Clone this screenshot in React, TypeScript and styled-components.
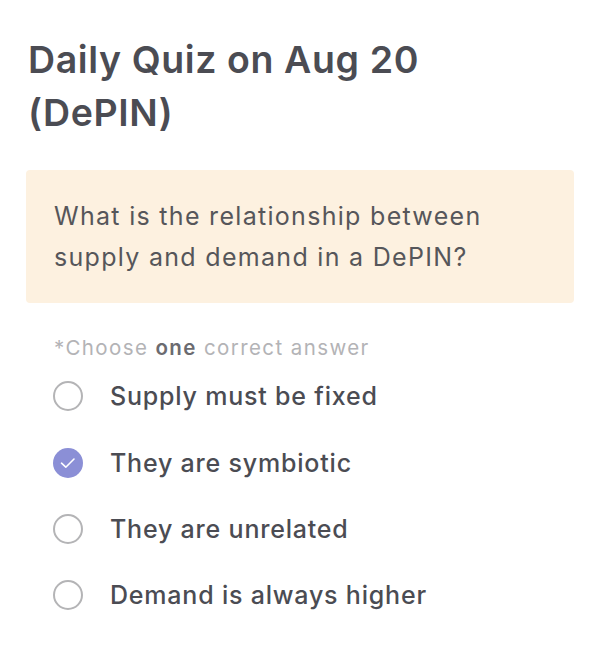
import React, { useState } from 'react';
import styled, { createGlobalStyle } from 'styled-components';

const GlobalStyle = createGlobalStyle`
  html, body {
    margin: 0;
    padding: 0;
    background: #ffffff;
  }
  body {
    font-family: Inter, 'Noto Sans', sans-serif;
  }
`;

const Page = styled.div`
  width: 600px;
  box-sizing: border-box;
  padding: 33px 26px 0 26px;
`;

const Title = styled.h1`
  margin: 0 0 0 2px;
  font-size: 37.5px;
  line-height: 53px;
  font-weight: 600;
  color: #4b4c53;
  letter-spacing: 0.6px;
`;

const QuestionBox = styled.div`
  margin-top: 31px;
  background: #fdf1e0;
  border-radius: 4px;
  padding: 26px 28px 25px 28px;
`;

const QuestionText = styled.p`
  margin: 0;
  font-size: 25px;
  line-height: 41px;
  font-weight: 400;
  color: #56565a;
  letter-spacing: 1.3px;
`;

const Hint = styled.div`
  margin: 32px 0 0 28px;
  font-size: 20.5px;
  line-height: 26px;
  color: #b3b3b6;
  letter-spacing: 1.4px;

  b {
    color: #6b6b70;
    font-weight: 600;
  }
`;

const Options = styled.div`
  display: flex;
  flex-direction: column;
  margin: 2px 0 0 27px;
`;

const Option = styled.label`
  display: flex;
  align-items: center;
  gap: 27px;
  height: 66.4px;
  cursor: pointer;
`;

const Radio = styled.span<{ $checked: boolean }>`
  width: 30px;
  height: 30px;
  box-sizing: border-box;
  border-radius: 50%;
  border: ${({ $checked }) => ($checked ? 'none' : '2px solid #b4b4b6')};
  background: ${({ $checked }) => ($checked ? '#8b8fd6' : 'transparent')};
  display: flex;
  align-items: center;
  justify-content: center;
  flex-shrink: 0;
`;

const OptionText = styled.span`
  font-size: 25px;
  font-weight: 500;
  color: #4b4c53;
  letter-spacing: 0.8px;
`;

const options = [
  'Supply must be fixed',
  'They are symbiotic',
  'They are unrelated',
  'Demand is always higher',
];

const App = () => {
  const [selected, setSelected] = useState(1);

  return (
    <Page>
      <GlobalStyle />
      <Title>
        Daily Quiz on Aug 20
        <br />
        (DePIN)
      </Title>
      <QuestionBox>
        <QuestionText>
          What is the relationship between
          <br />
          supply and demand in a DePIN?
        </QuestionText>
      </QuestionBox>
      <Hint>
        *Choose <b>one</b> correct answer
      </Hint>
      <Options>
        {options.map((opt, i) => (
          <Option key={opt} onClick={() => setSelected(i)}>
            <Radio $checked={selected === i}>
              {selected === i && (
                <svg width="30" height="30" viewBox="0 0 30 30" fill="none">
                  <path d="M8.5 15.2 L12.8 19.2 L21 11" stroke="#fff" strokeWidth="1.6" strokeLinecap="round" strokeLinejoin="round" />
                </svg>
              )}
            </Radio>
            <OptionText>{opt}</OptionText>
          </Option>
        ))}
      </Options>
    </Page>
  );
};

export default App;
